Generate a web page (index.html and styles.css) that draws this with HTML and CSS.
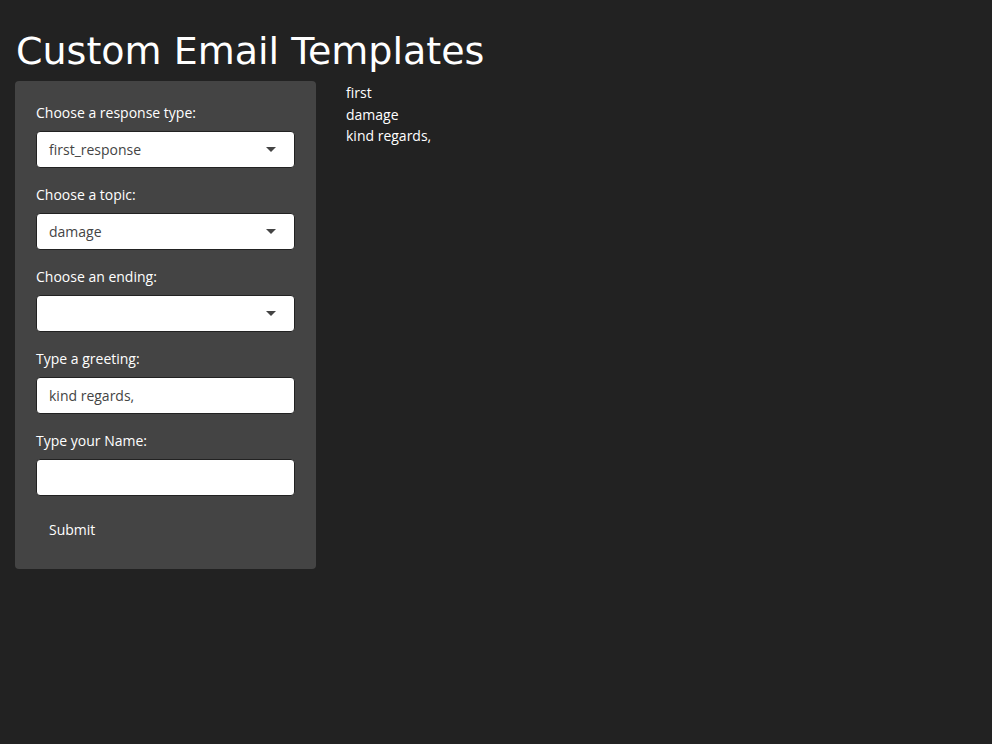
FILE: index.html
```html
<!DOCTYPE html>
<html>
<head>
<meta charset="utf-8">
<link rel="stylesheet" href="styles.css">
</head>
<body>
<div class="page">
  <h2 class="title">Custom Email Templates</h2>
  <div class="row">
    <form class="well">
      <div class="group">
        <label class="lbl">Choose a response type:</label>
        <div class="select"><span>first_response</span><i class="caret"></i></div>
      </div>
      <div class="group">
        <label class="lbl">Choose a topic:</label>
        <div class="select"><span>damage</span><i class="caret"></i></div>
      </div>
      <div class="group">
        <label class="lbl">Choose an ending:</label>
        <div class="select"><span></span><i class="caret"></i></div>
      </div>
      <div class="group">
        <label class="lbl">Type a greeting:</label>
        <div class="input">kind regards,</div>
      </div>
      <div class="group">
        <label class="lbl">Type your Name:</label>
        <div class="input"></div>
      </div>
      <div class="btn">Submit</div>
    </form>
    <div class="main">
      <div class="line">first</div>
      <div class="line">damage</div>
      <div class="line">kind regards,</div>
    </div>
  </div>
</div>
</body>
</html>
```
FILE: styles.css
```css
html, body { margin: 0; padding: 0; background: #222222; }
body { font-family: "Open Sans", "Noto Sans", sans-serif; font-size: 14px; color: #ffffff; }
.page { padding: 0 15px; }
.title {
  margin: 0; padding: 28px 0 0 1px; height: 81px; box-sizing: border-box;
  font-family: "DejaVu Sans", sans-serif; font-weight: 400; font-size: 38px; line-height: 46px;
  color: #fff;
}
.row { display: flex; align-items: flex-start; }
.well {
  width: 301px; box-sizing: border-box; background: #444444; border-radius: 4px;
  padding: 22px 21px 22px 21px; display: flex; flex-direction: column; margin: 0;
}
.group { display: flex; flex-direction: column; margin-bottom: 17px; }
.lbl { height: 20px; line-height: 20px; margin-bottom: 8px; color: #fff; }
.select, .input {
  height: 37px; box-sizing: border-box; background: #fff; border: 1px solid #222;
  border-radius: 4px; display: flex; align-items: center; padding: 0 12px; color: #444;
}
.select span { flex: 1; }
.caret { width: 0; height: 0; border-left: 5px solid transparent; border-right: 5px solid transparent; border-top: 5px solid #444; margin-right: 6px; }
.btn { height: 34px; line-height: 34px; padding: 0 13px; align-self: flex-start; color: #fff; }
.main { padding-left: 30px; padding-top: 1px; }
.line { line-height: 21.5px; }
```
